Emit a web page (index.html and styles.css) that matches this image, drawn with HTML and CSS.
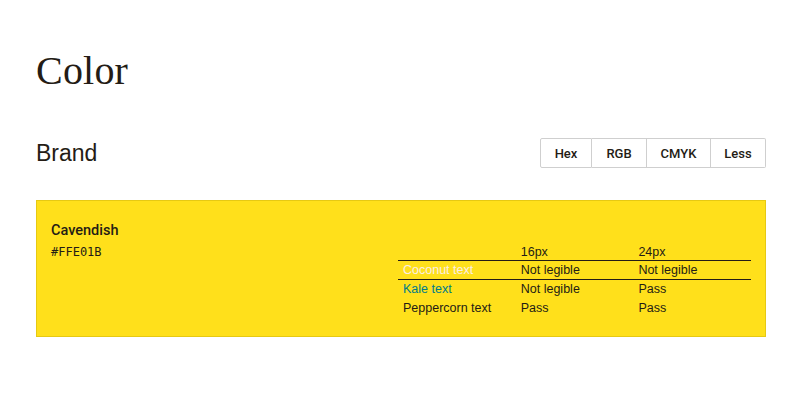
FILE: index.html
```html
<!DOCTYPE html>
<html>
<head>
<meta charset="utf-8">
<link rel="stylesheet" href="styles.css">
</head>
<body>
<main class="page">
  <h1 class="title">Color</h1>
  <div class="section-head">
    <h2 class="subtitle">Brand</h2>
    <div class="toggle">
      <button class="btn btn-hex">Hex</button>
      <button class="btn btn-rgb">RGB</button>
      <button class="btn btn-cmyk">CMYK</button>
      <button class="btn btn-less">Less</button>
    </div>
  </div>
  <div class="swatch">
    <div class="swatch-info">
      <div class="swatch-name">Cavendish</div>
      <div class="swatch-code">#FFE01B</div>
    </div>
    <table class="contrast">
      <thead>
        <tr><th></th><th>16px</th><th>24px</th></tr>
      </thead>
      <tbody>
        <tr class="row-coconut"><td class="coconut">Coconut text</td><td>Not legible</td><td>Not legible</td></tr>
        <tr><td class="kale">Kale text</td><td>Not legible</td><td>Pass</td></tr>
        <tr><td class="pepper">Peppercorn text</td><td>Pass</td><td>Pass</td></tr>
      </tbody>
    </table>
  </div>
</main>
</body>
</html>
```
FILE: styles.css
```css
* { box-sizing: border-box; }
html, body { margin: 0; padding: 0; background: #fff; }
body { font-family: "Liberation Sans", Arial, sans-serif; color: #241c15; }
.page { padding: 0 34px 0 36px; }
.title {
  font-family: "Liberation Serif", "Times New Roman", serif;
  font-weight: normal;
  font-size: 40px;
  line-height: 46px;
  margin: 0;
  padding-top: 48px;
  letter-spacing: 0.2px;
}
.section-head {
  display: flex;
  align-items: center;
  justify-content: space-between;
  margin-top: 44px;
}
.subtitle {
  font-weight: normal;
  font-size: 23px;
  line-height: 28px;
  margin: 0;
}
.toggle { display: flex; }
.btn {
  font-family: Roboto, "Liberation Sans", Arial, sans-serif;
  font-weight: 500;
  font-size: 13px;
  color: #241c15;
  background: #fff;
  border: 1px solid #cfcfcf;
  border-left: none;
  height: 30px;
  padding: 0;
  margin: 0;
}
.btn-hex { width: 52px; border-left: 1px solid #cfcfcf; border-radius: 2px 0 0 2px; }
.btn-rgb { width: 55px; }
.btn-cmyk { width: 64px; }
.btn-less { width: 55px; border-radius: 0 2px 2px 0; }
.swatch {
  margin-top: 32px;
  background: #ffe01b;
  border: 1px solid #e6c913;
  height: 137px;
  display: flex;
  justify-content: space-between;
  padding: 20px 14px 0 14px;
}
.swatch-name { font-family: Roboto, "Liberation Sans", Arial, sans-serif; font-weight: 500; font-size: 14.5px; line-height: 20px; }
.swatch-code {
  font-family: "DejaVu Sans Mono", "Liberation Mono", monospace;
  font-size: 12px;
  line-height: 20px;
  margin-top: 1px;
}
.contrast {
  width: 353px;
  border-collapse: collapse;
  margin-top: 20px;
  font-size: 12.5px;
  align-self: flex-start;
}
.contrast th, .contrast td {
  text-align: left;
  font-weight: normal;
  padding: 0 5px;
  height: 19px;
  width: 118px;
}
.contrast th { vertical-align: bottom; padding-bottom: 0; line-height: 16px; }
.contrast thead tr { border-bottom: 1px solid #241c15; }
.row-coconut { border-bottom: 1px solid #241c15; }
.coconut { color: #fbeee6; }
.kale { color: #007c89; }
.pepper { color: #241c15; }
```
